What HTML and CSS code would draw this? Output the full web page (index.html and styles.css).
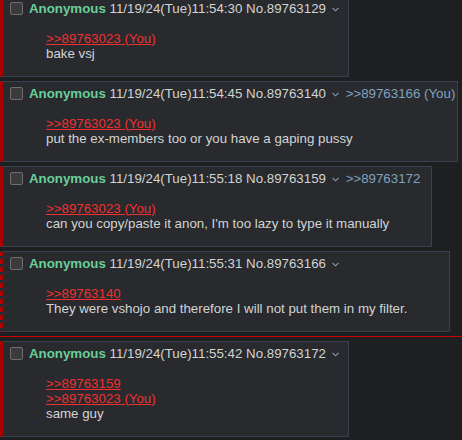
FILE: index.html
```html
<!DOCTYPE html>
<html lang="en">
<head>
  <meta charset="UTF-8">
  <meta name="viewport" content="width=device-width, initial-scale=1.0">
  <title>Thread</title>
  <link rel="stylesheet" href="styles.css">
</head>
<body>
  <div class="thread">

    <div class="post quotes-you">
      <div class="post-info">
        <input type="checkbox" class="post-check"><span class="name">Anonymous</span> <span class="date">11/19/24(Tue)11:54:30</span> <span class="num">No.89763129</span> <span class="menu-caret"><svg width="7" height="5" viewBox="0 0 7 5"><polyline points="0.5,0.8 3.5,3.8 6.5,0.8" fill="none" stroke="currentColor" stroke-width="1.1"/></svg></span>
      </div>
      <blockquote class="message"><a class="quote-link">&gt;&gt;89763023 (You)</a><br>bake vsj</blockquote>
    </div>

    <div class="post quotes-you">
      <div class="post-info">
        <input type="checkbox" class="post-check"><span class="name">Anonymous</span> <span class="date">11/19/24(Tue)11:54:45</span> <span class="num">No.89763140</span> <span class="menu-caret"><svg width="7" height="5" viewBox="0 0 7 5"><polyline points="0.5,0.8 3.5,3.8 6.5,0.8" fill="none" stroke="currentColor" stroke-width="1.1"/></svg></span><a class="backlink">&gt;&gt;89763166 (You)</a>
      </div>
      <blockquote class="message"><a class="quote-link">&gt;&gt;89763023 (You)</a><br>put the ex-members too or you have a gaping pussy</blockquote>
    </div>

    <div class="post quotes-you">
      <div class="post-info">
        <input type="checkbox" class="post-check"><span class="name">Anonymous</span> <span class="date">11/19/24(Tue)11:55:18</span> <span class="num">No.89763159</span> <span class="menu-caret"><svg width="7" height="5" viewBox="0 0 7 5"><polyline points="0.5,0.8 3.5,3.8 6.5,0.8" fill="none" stroke="currentColor" stroke-width="1.1"/></svg></span><a class="backlink">&gt;&gt;89763172</a>
      </div>
      <blockquote class="message"><a class="quote-link">&gt;&gt;89763023 (You)</a><br>can you copy/paste it anon, I'm too lazy to type it manually</blockquote>
    </div>

    <div class="post quotes-mine">
      <div class="post-info">
        <input type="checkbox" class="post-check"><span class="name">Anonymous</span> <span class="date">11/19/24(Tue)11:55:31</span> <span class="num">No.89763166</span> <span class="menu-caret"><svg width="7" height="5" viewBox="0 0 7 5"><polyline points="0.5,0.8 3.5,3.8 6.5,0.8" fill="none" stroke="currentColor" stroke-width="1.1"/></svg></span>
      </div>
      <blockquote class="message"><a class="quote-link">&gt;&gt;89763140</a><br>They were vshojo and therefore I will not put them in my filter.</blockquote>
    </div>

    <hr class="unread-line">

    <div class="post quotes-you">
      <div class="post-info">
        <input type="checkbox" class="post-check"><span class="name">Anonymous</span> <span class="date">11/19/24(Tue)11:55:42</span> <span class="num">No.89763172</span> <span class="menu-caret"><svg width="7" height="5" viewBox="0 0 7 5"><polyline points="0.5,0.8 3.5,3.8 6.5,0.8" fill="none" stroke="currentColor" stroke-width="1.1"/></svg></span>
      </div>
      <blockquote class="message"><a class="quote-link">&gt;&gt;89763159</a><br><a class="quote-link">&gt;&gt;89763023 (You)</a><br>same guy</blockquote>
    </div>

  </div>
</body>
</html>
```

FILE: styles.css
```css
body {
  margin: 0;
  background: #1d1f21;
  color: #d2d4d3;
  font-family: "Liberation Sans", Arial, sans-serif;
  font-size: 13.3px;
  line-height: 15px;
}

.thread {
  margin-top: -8px;
}

.post {
  display: table;
  background: #282a2e;
  border: 1px solid #394050;
  border-left: 3px solid #a80000;
  padding: 2px;
  margin: 4px 0;
}

.post.quotes-mine {
  border-left-color: transparent;
  background: repeating-linear-gradient(to bottom, #b00000 0 5px, transparent 5px 8px) left top / 3px 100% no-repeat border-box, #282a2e;
}

.post-info {
  height: 19px;
  line-height: 19px;
  white-space: nowrap;
}

.post-check {
  appearance: none;
  -webkit-appearance: none;
  width: 13px;
  height: 13px;
  margin: 0 6px 0 5px;
  border: 1px solid #6e6e6e;
  border-radius: 2px;
  background: #3b3b3b;
  vertical-align: -2px;
  box-sizing: border-box;
}

.name {
  color: #68cf98;
  font-weight: bold;
}

.menu-caret {
  display: inline-block;
  color: #8a9bb3;
  padding: 0 7px 0 2px;
  vertical-align: 1px;
}

.menu-caret svg {
  display: block;
}

.backlink {
  color: #81a2be;
}

.message {
  margin: 13px 40px 13px 41px;
}

.quote-link {
  color: #f03030;
  text-decoration: underline;
}

.unread-line {
  border: none;
  border-top: 1px solid #d00000;
  height: 0;
  margin: 4px 0;
}
```
